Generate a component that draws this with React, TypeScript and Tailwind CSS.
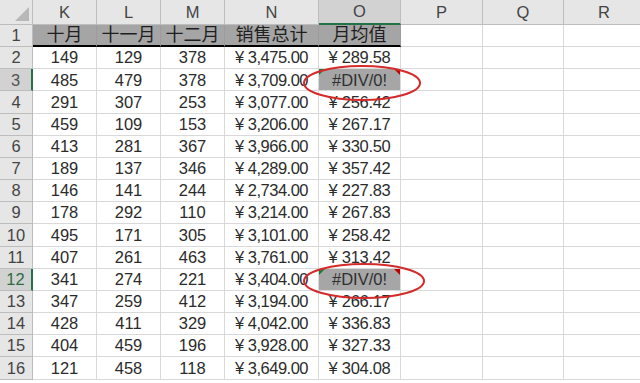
import React from "react";

const cols = ["K", "L", "M", "N", "O", "P", "Q", "R"];
const heads = ["十月", "十一月", "十二月", "销售总计", "月均值"];

const rows: [number, number, number, string, string][] = [
  [149, 129, 378, "3,475.00", "289.58"],
  [485, 479, 378, "3,709.00", "#DIV/0!"],
  [291, 307, 253, "3,077.00", "256.42"],
  [459, 109, 153, "3,206.00", "267.17"],
  [413, 281, 367, "3,966.00", "330.50"],
  [189, 137, 346, "4,289.00", "357.42"],
  [146, 141, 244, "2,734.00", "227.83"],
  [178, 292, 110, "3,214.00", "267.83"],
  [495, 171, 305, "3,101.00", "258.42"],
  [407, 261, 463, "3,761.00", "313.42"],
  [341, 274, 221, "3,404.00", "#DIV/0!"],
  [347, 259, 412, "3,194.00", "266.17"],
  [428, 411, 329, "4,042.00", "336.83"],
  [404, 459, 196, "3,928.00", "327.33"],
  [121, 458, 118, "3,649.00", "304.08"],
];

const cell = "flex items-center justify-center border-r border-b border-[#d9d9d9] text-[#2b2b2b]";

function ErrorCell() {
  return (
    <div className="relative flex items-center justify-center border-r border-b border-[#d9d9d9] bg-[#a6a6a6] text-[#303030]">
      <span className="absolute left-0 top-0 h-0 w-0 border-r-[6px] border-t-[6px] border-r-transparent border-t-[#1e7a3c]" />
      <span className="absolute right-0 top-0 h-0 w-0 border-l-[6px] border-t-[6px] border-l-transparent border-t-[#c00000]" />
      #DIV/0!
    </div>
  );
}

export default function App() {
  return (
    <div
      className="relative h-[383px] w-[640px] overflow-hidden bg-white text-[16.5px]"
      style={{ fontFamily: '"Liberation Sans", "Noto Sans CJK SC", sans-serif' }}
    >
      <div className="grid grid-cols-[33px_64px_64px_64px_94px_82px_82px_81px_81px] grid-rows-[25px_repeat(16,22.17px)]">
        {/* Column headers */}
        <div className="relative border-r border-b border-[#bdbdbd] bg-[#e6e6e6]">
          <svg className="absolute right-[3px] bottom-[3px]" width="14" height="14">
            <polygon points="14,0 14,14 0,14" fill="#b8b8b8" />
          </svg>
        </div>
        {cols.map((c) => (
          <div
            key={c}
            className={`flex items-center justify-center border-r text-[#444] ${
              c === "O"
                ? "border-b-2 border-r-[#bdbdbd] border-b-[#217346] bg-[#d2d2d2]"
                : "border-b border-[#bdbdbd] bg-[#e6e6e6]"
            }`}
          >
            {c}
          </div>
        ))}

        {/* Row 1 */}
        <div className="flex items-center justify-center border-r border-b border-[#bdbdbd] bg-[#e6e6e6] text-[#444]">1</div>
        {heads.map((h) => (
          <div
            key={h}
            className="flex items-center justify-center border-r border-b-2 border-r-[#9c9c9c] border-b-black bg-[#a5a5a5] text-[18px] text-[#1f1f1f]"
          >
            {h}
          </div>
        ))}
        <div className={cell} />
        <div className={cell} />
        <div className={cell} />

        {/* Data rows */}
        {rows.map((r, i) => {
          const n = i + 2;
          const sel = n === 3 || n === 12;
          return (
            <React.Fragment key={n}>
              <div
                className={`flex items-center justify-center border-b border-[#bdbdbd] ${
                  sel
                    ? `border-r-2 border-r-[#217346] bg-[#d2d2d2] ${n === 12 ? "text-[#2f6b45]" : "text-[#555]"}`
                    : "border-r bg-[#e6e6e6] text-[#444]"
                }`}
              >
                {n}
              </div>
              <div className={cell}>{r[0]}</div>
              <div className={cell}>{r[1]}</div>
              <div className={cell}>{r[2]}</div>
              <div className={`${cell} tracking-[-0.5px]`}>¥ {r[3]}</div>
              {r[4] === "#DIV/0!" ? <ErrorCell /> : <div className={`${cell} tracking-[-0.3px]`}>¥ {r[4]}</div>}
              <div className={cell} />
              <div className={cell} />
              <div className={cell} />
            </React.Fragment>
          );
        })}
      </div>

      {/* Red annotation ellipses */}
      <svg className="pointer-events-none absolute left-0 top-0" width="640" height="383">
        <ellipse cx="362" cy="83" rx="58" ry="17" fill="none" stroke="#d42a2a" strokeWidth="2" />
        <ellipse cx="364" cy="281" rx="60" ry="17" fill="none" stroke="#d42a2a" strokeWidth="2" />
      </svg>
    </div>
  );
}
